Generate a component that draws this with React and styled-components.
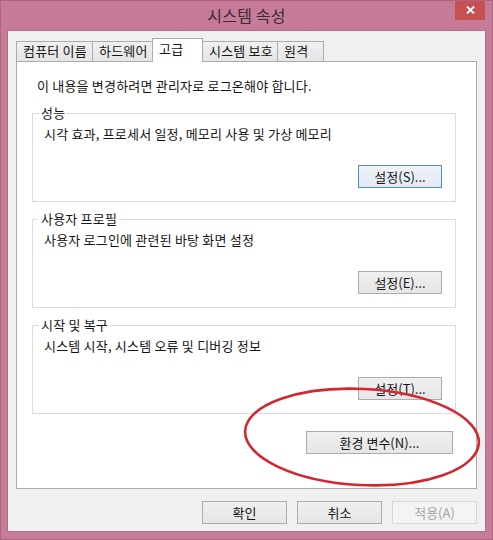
import styled, { createGlobalStyle } from "styled-components";

const GlobalStyle = createGlobalStyle`
  html, body {
    margin: 0;
    padding: 0;
    background: #c67b98;
  }
  body {
    font-family: "Noto Sans CJK KR", "Noto Sans", sans-serif;
    font-size: 13px;
    letter-spacing: 0.2px;
    color: #151515;
  }
`;

const Window = styled.div`
  position: relative;
  width: 493px;
  height: 540px;
  box-sizing: border-box;
  background: #c67b98;
  border: 1px solid #ad6482;
  display: flex;
  flex-direction: column;
  overflow: hidden;
`;

const TitleBar = styled.div`
  height: 30px;
  display: grid;
  grid-template-columns: 1fr auto 1fr;
  padding: 0 7px;
`;

const Title = styled.div`
  grid-column: 2;
  font-size: 16px;
  line-height: 28px;
  color: #3a2a31;
`;

const CloseButton = styled.div`
  grid-column: 3;
  justify-self: end;
  width: 30px;
  height: 20px;
  margin-top: -1px;
  background: #c75050;
  display: flex;
  align-items: center;
  justify-content: center;
`;

const Client = styled.div`
  flex: 1;
  margin: 0 7px 8px;
  background: #f0f0f0;
  box-shadow: 0 0 0 1px #b26c88;
  display: flex;
  flex-direction: column;
  padding: 7px 8px 0 8px;
`;

const TabRow = styled.div`
  position: relative;
  z-index: 1;
  height: 24px;
  display: flex;
  align-items: flex-end;
`;

const Tab = styled.div`
  position: relative;
  box-sizing: border-box;
  width: ${(p) => p.$w}px;
  height: ${(p) => (p.$active ? 24 : 21)}px;
  margin-left: -1px;
  padding: ${(p) => (p.$active ? "2px" : "1px")} 0 0 6px;
  border: 1px solid #acacac;
  border-bottom: ${(p) => (p.$active ? "none" : "1px solid #acacac")};
  background: ${(p) =>
    p.$active ? "#ffffff" : "linear-gradient(#f0f0f0, #e5e5e5)"};
  z-index: ${(p) => (p.$active ? 2 : 1)};
  line-height: 16px;
  white-space: nowrap;
  overflow: hidden;

  &:first-child {
    margin-left: 0;
  }
`;

const Panel = styled.div`
  box-sizing: border-box;
  height: 428px;
  margin-top: -1px;
  background: #ffffff;
  border: 1px solid #acacac;
  padding: 16px 20px 0 15px;
  display: flex;
  flex-direction: column;
`;

const Intro = styled.div`
  padding-left: 5px;
  line-height: 16px;
`;

const Group = styled.fieldset`
  margin: ${(p) => (p.$first ? 11 : 9)}px 0 0;
  padding: 5px 13px 13px 11px;
  border: 1px solid #dcdcdc;
  min-inline-size: 0;
`;

const Legend = styled.legend`
  margin-left: -5px;
  padding: 0 2px;
  line-height: 16px;
  font-size: 13px;
`;

const Desc = styled.div`
  line-height: 16px;
`;

const ButtonRow = styled.div`
  display: flex;
  justify-content: flex-end;
  margin-top: ${(p) => p.$top || 0}px;
  padding-right: ${(p) => p.$right || 0}px;
`;

const Button = styled.button`
  box-sizing: border-box;
  width: ${(p) => p.$w || 85}px;
  height: 23px;
  padding: 0;
  font-family: inherit;
  font-size: 13px;
  letter-spacing: 0;
  line-height: 20px;
  color: #151515;
  border: 1px solid #acacac;
  background: linear-gradient(#f0f0f0, #e5e5e5);

  ${(p) =>
    p.$focused &&
    `
    border-color: #4f8ed0;
    background: linear-gradient(#eef3f8, #e2e9f0);
  `}

  &:disabled {
    color: #a3a3a3;
    border-color: #d6d6d6;
    background: #f4f4f4;
  }
`;

const Footer = styled.div`
  display: flex;
  justify-content: flex-end;
  gap: 10px;
  padding: 12px 0 7px;
`;

const Mark = styled.svg`
  position: absolute;
  left: 238px;
  top: 381px;
  pointer-events: none;
`;

const tabs = [
  { label: "컴퓨터 이름", w: 77 },
  { label: "하드웨어", w: 61 },
  { label: "고급", w: 51, active: true },
  { label: "시스템 보호", w: 76 },
  { label: "원격", w: 47 },
];

const groups = [
  {
    title: "성능",
    desc: "시각 효과, 프로세서 일정, 메모리 사용 및 가상 메모리",
    button: "설정(S)...",
    focused: true,
  },
  {
    title: "사용자 프로필",
    desc: "사용자 로그인에 관련된 바탕 화면 설정",
    button: "설정(E)...",
  },
  {
    title: "시작 및 복구",
    desc: "시스템 시작, 시스템 오류 및 디버깅 정보",
    button: "설정(T)...",
  },
];

const App = () => {
  return (
    <>
      <GlobalStyle />
      <Window>
        <TitleBar>
          <Title>시스템 속성</Title>
          <CloseButton>
            <svg width="9" height="8" viewBox="0 0 9 8">
              <path d="M1 0.5 L8 7.5 M8 0.5 L1 7.5" stroke="#fff" strokeWidth="1.8" />
            </svg>
          </CloseButton>
        </TitleBar>
        <Client>
          <TabRow>
            {tabs.map((t) => (
              <Tab key={t.label} $w={t.w} $active={t.active}>
                {t.label}
              </Tab>
            ))}
          </TabRow>
          <Panel>
            <Intro>이 내용을 변경하려면 관리자로 로그온해야 합니다.</Intro>
            {groups.map((g, i) => (
              <Group key={g.title} $first={i === 0}>
                <Legend>{g.title}</Legend>
                <Desc>{g.desc}</Desc>
                <ButtonRow $top={23}>
                  <Button $w={84} $focused={g.focused}>
                    {g.button}
                  </Button>
                </ButtonRow>
              </Group>
            ))}
            <ButtonRow $top={17} $right={3}>
              <Button $w={147}>환경 변수(N)...</Button>
            </ButtonRow>
          </Panel>
          <Footer>
            <Button>확인</Button>
            <Button>취소</Button>
            <Button disabled>적용(A)</Button>
          </Footer>
        </Client>
        <Mark width="250" height="112" viewBox="0 0 250 112">
          <ellipse
            cx="123"
            cy="55"
            rx="117"
            ry="48"
            transform="rotate(3 123 55)"
            fill="none"
            stroke="#d22630"
            strokeWidth="2.6"
          />
        </Mark>
      </Window>
    </>
  );
};

export default App;
